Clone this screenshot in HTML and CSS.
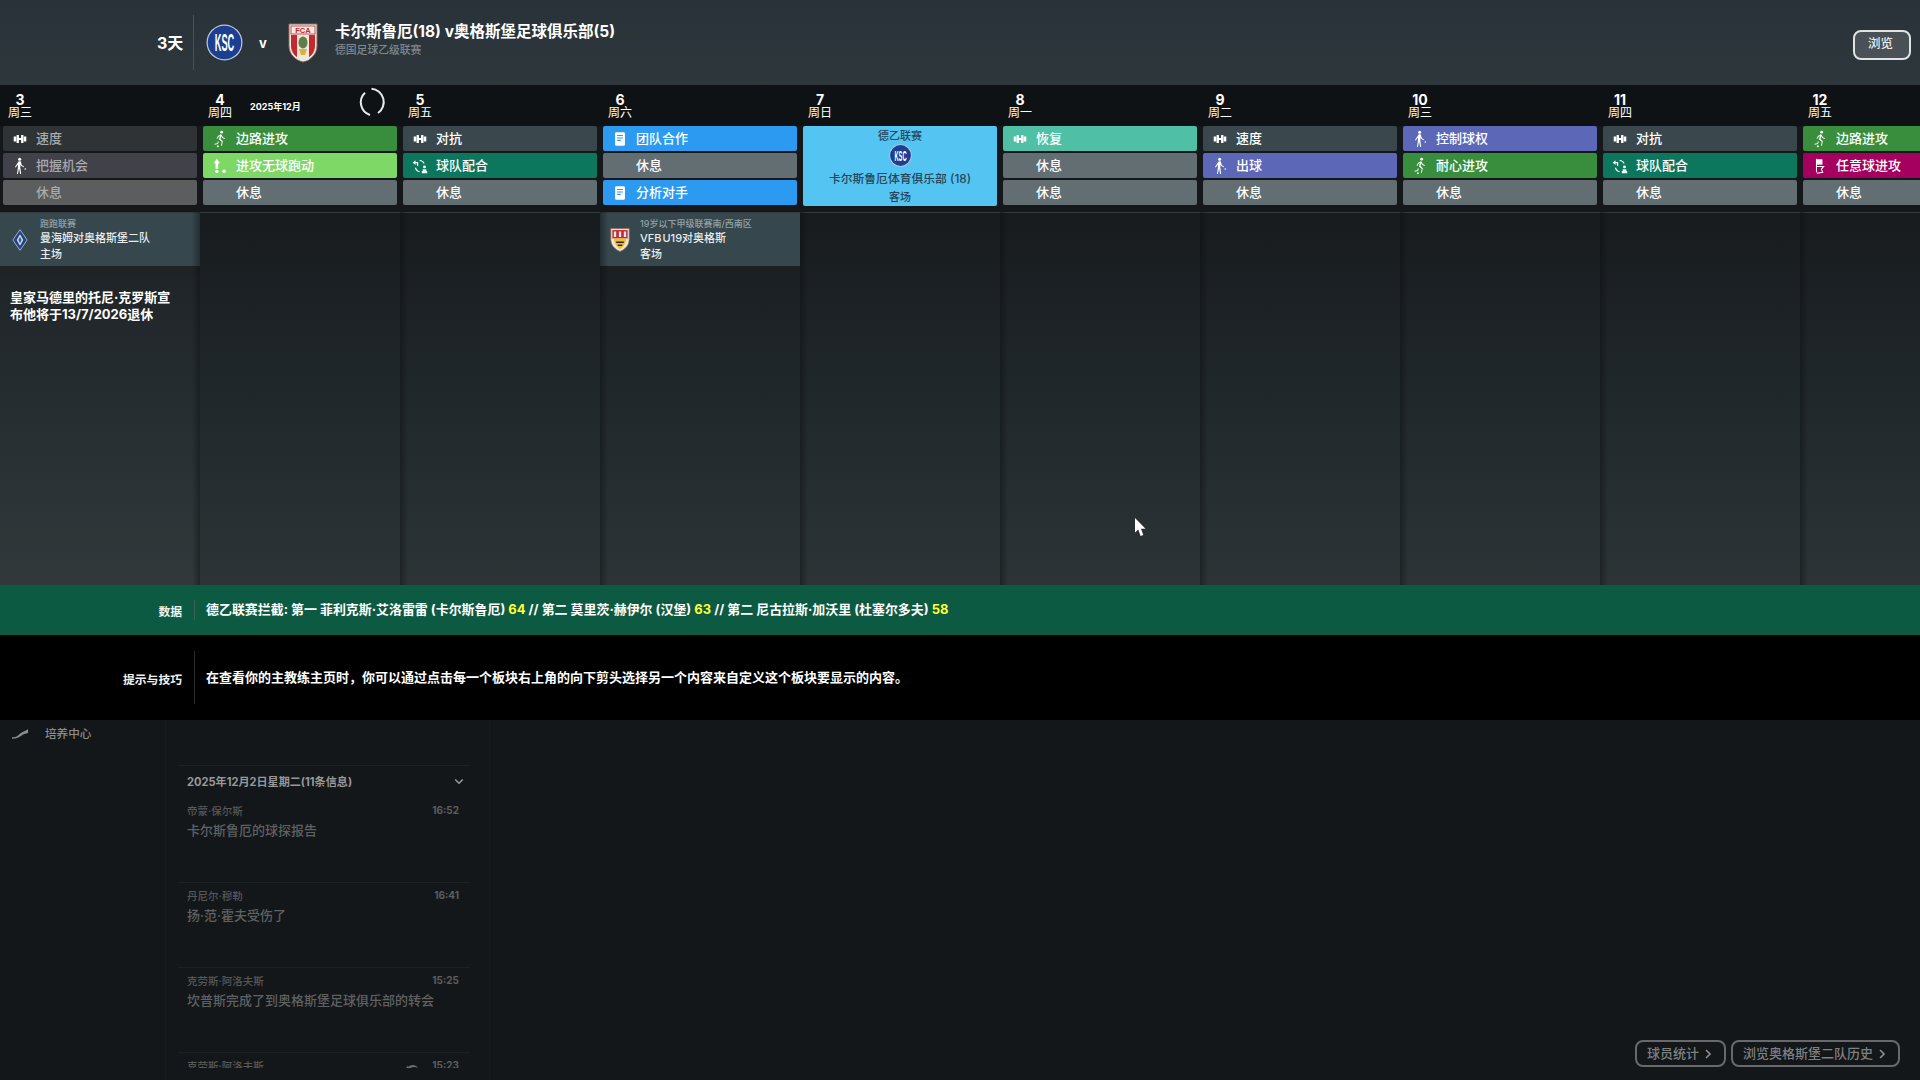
FILE: index.html
```html
<!DOCTYPE html>
<html lang="zh-CN">
<head>
<meta charset="utf-8">
<title>主教练主页</title>
<link rel="stylesheet" href="styles.css">
</head>
<body>
<svg class="defs" aria-hidden="true">
  <symbol id="i-dumb" viewBox="0 0 20 20"><path d="M3 7.200h2.800v5.600H3zM6.200 5.600h2.600v8.800H6.200zM8.800 8.800h2.400v2.400H8.800zM11.200 5.600h2.600v8.800h-2.600zM14.200 7.200H17v5.600h-2.800z"/></symbol>
  <symbol id="i-person" viewBox="0 0 20 20"><circle cx="9.600" cy="2.400" r="1.700"/><path d="M8.600 4.800h2.200l1.300 4.300 2.500 1.400-.5.9-3.100-1.600-.5-1.300-.2 2.800 1 7.700h-1.100l-1.300-6.300-1.200 6.300H6.700l1-8-.1-2.600-2.300 3.300-.9-.6z"/><circle cx="15.900" cy="13.400" r=".9"/></symbol>
  <symbol id="i-run" viewBox="0 0 20 20"><circle cx="11.800" cy="2.400" r="1.600"/><path d="M10.900 4.800 7.700 6.600 6.200 9.700l.8.400 1.400-2.600 1.500-.8-1 3.800 3.100 2.600-1 4.300h1l1.200-4.800-2.600-2.500.9-3.100 1 1.900 2.600 1 .3-.9-2.200-.9-1.300-2.700zM7.700 12.400l-.8 2.300-3 .6.100 1 3.700-.8 1-2.400z"/><circle cx="7.600" cy="18" r="1.100"/></symbol>
  <symbol id="i-doc" viewBox="0 0 20 20"><path fill-rule="evenodd" d="M6 2.500h8A1.500 1.500 0 0 1 15.500 4v12a1.500 1.500 0 0 1-1.500 1.500H6A1.500 1.500 0 0 1 4.500 16V4A1.500 1.500 0 0 1 6 2.500zM6.800 5.500v1.200h6.400V5.500zM6.800 8.200v1.200h6.400V8.200zM6.800 10.900v1.200h4v-1.200z"/></symbol>
  <symbol id="i-team" viewBox="0 0 20 20"><path d="M5 3.500 1.800 6.300 5 9V7h1.600v3H8V5.600H5zM4.200 12h1.400c.6 2 2 3.200 4 3.700V17c-2.800-.5-4.700-2.300-5.400-5zM9.500 3.200c2.700 0 4.800 1.400 5.700 3.800l-1.300.4c-.7-1.700-2.300-2.900-4.400-2.900z"/><circle cx="15" cy="11" r="1.600"/><path d="M13 13.500h4v2h1V18h-6v-2.500h1z"/></symbol>
  <symbol id="i-up" viewBox="0 0 20 20"><path d="M6.500 2 10 7H8v6H5V7H3z"/><circle cx="6.500" cy="16" r="1.800"/><circle cx="14.500" cy="15.800" r="1.900"/></symbol>
  <symbol id="i-flag" viewBox="0 0 20 20"><path d="M5.500 2h1.200v15H5.500z"/><path d="M6.700 2.500h6v6h-6z"/><path fill="none" stroke="currentColor" stroke-width="1.200" d="M6.500 10.500H14l-2.500 3 1.500 3.500-6.500 1"/></symbol>
  <symbol id="i-ksc" viewBox="0 0 36 36"><circle cx="18" cy="18" r="17.500" fill="#b9c6df"/><circle cx="18" cy="18" r="16.300" fill="#1d3f92"/><text x="18" y="26.500" text-anchor="middle" textLength="19" lengthAdjust="spacingAndGlyphs" class="ksc-text">KSC</text></symbol>
</svg>

<header class="top">
  <div class="countdown">3天</div>
  <div class="crests">
    <svg class="crest-home"><use href="#i-ksc"/></svg>
    <span class="versus">v</span>
    <svg class="crest-away" viewBox="0 0 30 40">
      <path d="M1 1h28v22c0 8-6 14-14 16C7 37 1 31 1 23z" fill="#f1ece6" stroke="#8c6a57" stroke-width="1"/>
      <path d="M3 12h24v11c0 7-5 12-12 14C8 35 3 30 3 23z" fill="#c5282d"/>
      <path d="M9 12h12v25l-6 1-6-2z" fill="#efe7dc"/>
      <ellipse cx="15" cy="19.500" rx="4.500" ry="6" fill="#5f7f4a"/>
      <path d="M11 26h8l-2 6h-4z" fill="#d7b13c"/>
      <rect x="3" y="3" width="24" height="8" fill="#f1ece6" stroke="#c5282d" stroke-width=".8"/>
      <text x="15" y="10" text-anchor="middle" class="fca-text">FCA</text>
    </svg>
  </div>
  <div class="fixture">
    <div class="fixture-title">卡尔斯鲁厄(18) v奥格斯堡足球俱乐部(5)</div>
    <div class="fixture-league">德国足球乙级联赛</div>
  </div>
  <button class="browse">浏览</button>
</header>

<section class="calendar">
  <article class="col past">
    <div class="day"><div class="date"><b>3</b><span>周三</span></div></div>
    <div class="tasks">
      <div class="task dim"><svg class="ic"><use href="#i-dumb"/></svg>速度</div>
      <div class="task dim-purple"><svg class="ic"><use href="#i-person"/></svg>把握机会</div>
      <div class="task dim-rest rest">休息</div>
    </div>
    <div class="event">
      <svg class="ev-crest" viewBox="0 0 24 34"><path d="M12 1 23 17 12 33 1 17z" fill="#26427c" stroke="#9db4dc" stroke-width="1.500"/><path d="M12 8l5 9-5 9-5-9z" fill="#d8e3f3"/><path d="M12 12l2.500 5-2.500 5-2.500-5z" fill="#2f5aa6"/></svg>
      <div class="ev-text"><small>跑跑联赛</small><span>曼海姆对奥格斯堡二队</span><span>主场</span></div>
    </div>
    <p class="news">皇家马德里的托尼·克罗斯宣<br>布他将于13/7/2026退休</p>
  </article>

  <article class="col current">
    <div class="day">
      <div class="date"><b>4</b><span>周四</span></div>
      <div class="month">2025年12月</div>
      <svg class="spinner" viewBox="0 0 27 28"><path d="M7 4.700A13.300 13.300 0 0 0 12 27M13.500 .8A13.300 13.300 0 0 1 20 25"/></svg>
    </div>
    <div class="tasks">
      <div class="task green"><svg class="ic"><use href="#i-run"/></svg>边路进攻</div>
      <div class="task lime"><svg class="ic"><use href="#i-up"/></svg>进攻无球跑动</div>
      <div class="task rest-bar rest">休息</div>
    </div>
  </article>

  <article class="col">
    <div class="day"><div class="date"><b>5</b><span>周五</span></div></div>
    <div class="tasks">
      <div class="task slate"><svg class="ic"><use href="#i-dumb"/></svg>对抗</div>
      <div class="task teal"><svg class="ic"><use href="#i-team"/></svg>球队配合</div>
      <div class="task rest-bar rest">休息</div>
    </div>
  </article>

  <article class="col">
    <div class="day"><div class="date"><b>6</b><span>周六</span></div></div>
    <div class="tasks">
      <div class="task blue"><svg class="ic"><use href="#i-doc"/></svg>团队合作</div>
      <div class="task rest-bar rest">休息</div>
      <div class="task blue"><svg class="ic"><use href="#i-doc"/></svg>分析对手</div>
    </div>
    <div class="event">
      <svg class="ev-crest vfb" viewBox="0 0 26 34"><path d="M1 2h24v14c0 8-5 13-12 16C6 29 1 24 1 16z" fill="#f0e6dc" stroke="#8a6a5a"/><path d="M3 4h20v11H3z" fill="#c22a3c"/><path d="M5 15h16c0 5-3 11-8 14-5-3-8-9-8-14z" fill="#eec02e"/><path d="M8 19h10v2H8zM10 23h6v2h-6z" fill="#2a2a2a"/><path d="M5 6h3v7H5zM11.500 6h3v7h-3zM18 6h3v7h-3z" fill="#f4e9e0"/></svg>
      <div class="ev-text"><small>19岁以下甲级联赛南/西南区</small><span class="bright">VFB U19对奥格斯</span><span>客场</span></div>
    </div>
  </article>

  <article class="col">
    <div class="day"><div class="date"><b>7</b><span>周日</span></div></div>
    <div class="tasks">
      <div class="match">
        <div class="match-comp">德乙联赛</div>
        <svg class="match-crest"><use href="#i-ksc"/></svg>
        <div class="match-team">卡尔斯鲁厄体育俱乐部 (18)</div>
        <div class="match-comp">客场</div>
      </div>
    </div>
  </article>

  <article class="col">
    <div class="day"><div class="date"><b>8</b><span>周一</span></div></div>
    <div class="tasks">
      <div class="task mint"><svg class="ic"><use href="#i-dumb"/></svg>恢复</div>
      <div class="task rest-bar rest">休息</div>
      <div class="task rest-bar rest">休息</div>
    </div>
  </article>

  <article class="col">
    <div class="day"><div class="date"><b>9</b><span>周二</span></div></div>
    <div class="tasks">
      <div class="task slate"><svg class="ic"><use href="#i-dumb"/></svg>速度</div>
      <div class="task purple"><svg class="ic"><use href="#i-person"/></svg>出球</div>
      <div class="task rest-bar rest">休息</div>
    </div>
  </article>

  <article class="col">
    <div class="day"><div class="date"><b>10</b><span>周三</span></div></div>
    <div class="tasks">
      <div class="task purple"><svg class="ic"><use href="#i-person"/></svg>控制球权</div>
      <div class="task green"><svg class="ic"><use href="#i-run"/></svg>耐心进攻</div>
      <div class="task rest-bar rest">休息</div>
    </div>
  </article>

  <article class="col">
    <div class="day"><div class="date"><b>11</b><span>周四</span></div></div>
    <div class="tasks">
      <div class="task slate"><svg class="ic"><use href="#i-dumb"/></svg>对抗</div>
      <div class="task teal"><svg class="ic"><use href="#i-team"/></svg>球队配合</div>
      <div class="task rest-bar rest">休息</div>
    </div>
  </article>

  <article class="col">
    <div class="day"><div class="date"><b>12</b><span>周五</span></div></div>
    <div class="tasks">
      <div class="task green"><svg class="ic"><use href="#i-run"/></svg>边路进攻</div>
      <div class="task magenta"><svg class="ic"><use href="#i-flag"/></svg>任意球进攻</div>
      <div class="task rest-bar rest">休息</div>
    </div>
  </article>
</section>

<section class="band stats">
  <div class="band-label">数据</div>
  <div class="band-text">德乙联赛拦截: 第一 菲利克斯·艾洛雷雷 (卡尔斯鲁厄) <em>64</em> // 第二 莫里茨·赫伊尔 (汉堡) <em>63</em> // 第二 尼古拉斯·加沃里 (杜塞尔多夫) <em>58</em></div>
</section>

<section class="band tips">
  <div class="band-label">提示与技巧</div>
  <div class="band-text">在查看你的主教练主页时，你可以通过点击每一个板块右上角的向下剪头选择另一个内容来自定义这个板块要显示的内容。</div>
</section>

<section class="lower">
  <div class="lower-title">
    <svg class="growth" viewBox="0 0 18 10"><path d="M0 8.500c4 0 5-.8 7-2.500s4-3.500 5.500-3.700L17 0v4c-3 .6-5 1.500-7.500 3S4 10 0 10z"/></svg>
    <span>培养中心</span>
  </div>
  <div class="inbox">
    <div class="inbox-list">
      <div class="inbox-head"><span>2025年12月2日星期二(11条信息)</span><svg class="chev" viewBox="0 0 12 8"><path d="M1.500 1.500 6 6l4.500-4.500"/></svg></div>
      <div class="msg"><div class="msg-meta"><span>帝蒙·保尔斯</span><time>16:52</time></div><div class="msg-title">卡尔斯鲁厄的球探报告</div></div>
      <div class="msg"><div class="msg-meta"><span>丹尼尔·穆勒</span><time>16:41</time></div><div class="msg-title">扬·范·霍夫受伤了</div></div>
      <div class="msg"><div class="msg-meta"><span>克劳斯·阿洛夫斯</span><time>15:25</time></div><div class="msg-title">坎普斯完成了到奥格斯堡足球俱乐部的转会</div></div>
      <div class="msg"><div class="msg-meta"><span>克劳斯·阿洛夫斯</span><svg class="reply" viewBox="0 0 14 8"><path d="M0 7 3 2v2c4-3 8-3 11 1-4-2-7-1-9 1l1 1z"/></svg><time>15:23</time></div></div>
    </div>
  </div>
  <div class="lower-actions">
    <button class="ghost">球员统计<svg class="more" viewBox="0 0 6 10"><path d="M1 1l4 4-4 4"/></svg></button>
    <button class="ghost">浏览奥格斯堡二队历史<svg class="more" viewBox="0 0 6 10"><path d="M1 1l4 4-4 4"/></svg></button>
  </div>
</section>

<svg class="cursor" viewBox="0 0 11 19"><path d="M0 0v14.500l3.300-3 2.300 6.500 2.700-1-2.300-6.200h4.500z" fill="#fff"/></svg>
</body>
</html>
```

FILE: styles.css
```css
* { box-sizing: border-box; }

html, body {
  margin: 0;
  width: 1920px;
  height: 1080px;
  overflow: hidden;
}

body {
  position: relative;
  display: flex;
  flex-direction: column;
  background: #141719;
  color: #fff;
  font-family: "Inter", "Noto Sans CJK SC", sans-serif;
  font-weight: 500;
}

.defs { display: none; }

/* top fixture bar */
.top {
  flex: 0 0 85px;
  display: flex;
  align-items: center;
  padding: 0 9px 0 157px;
  background: linear-gradient(#283238, #2d373c);
}

.countdown {
  width: 37px;
  height: 55px;
  padding-top: 17px;
  border-right: 1px solid #495257;
  font-size: 16px;
  line-height: 22px;
  font-weight: 700;
  white-space: nowrap;
}

.crests {
  display: flex;
  align-items: center;
  margin-left: 12px;
  width: 128px;
}

.crest-home { width: 37px; height: 37px; }

.versus {
  margin-left: 16px;
  width: 29px;
  font-size: 13px;
  font-weight: 700;
}

.crest-away { width: 30px; height: 40px; }

.ksc-text {
  font-family: "Liberation Sans", sans-serif;
  font-size: 24px;
  font-weight: 700;
  fill: #fff;
}

.fca-text {
  font-family: "Liberation Sans", sans-serif;
  font-size: 7.500px;
  font-weight: 700;
  fill: #c5282d;
}

.fixture { flex: 1; margin-top: -6px; margin-left: 1px; }

.fixture-title {
  font-size: 15.500px;
  line-height: 22px;
  font-weight: 700;
}

.fixture-league {
  font-size: 10.800px;
  line-height: 15px;
  color: #7f878b;
}

.browse {
  width: 58px;
  height: 30px;
  margin-top: 5px;
  padding: 0 3px 5px 0;
  border: 2px solid #dfe3e4;
  border-radius: 8px;
  background: #4a5156;
  color: #e9ebec;
  font: inherit;
  font-size: 12.500px;
}

/* calendar */
.calendar {
  flex: 0 0 500px;
  display: flex;
  overflow: hidden;
  background: linear-gradient(#121518 0, #171b1e 25%, #20272a 60%, #2c3436 100%);
}

.col {
  position: relative;
  flex: 0 0 200px;
  display: flex;
  flex-direction: column;
  align-items: stretch;
}

.col::after {
  content: "";
  position: absolute;
  left: 100%;
  top: 127px;
  bottom: 0;
  width: 8px;
  background: linear-gradient(90deg, rgba(10, 12, 14, .42), rgba(10, 12, 14, 0));
  z-index: 1;
}

.past {
  background: linear-gradient(transparent 127px, rgba(255, 255, 255, .025) 200px);
}

.past::after {
  left: auto;
  right: 0;
  background: linear-gradient(270deg, rgba(10, 12, 14, .42), rgba(10, 12, 14, 0));
}

.current { z-index: 2; }

.day {
  flex: 0 0 41px;
  position: relative;
  background: #0f1215;
  padding: 4px 0 0 8px;
}

.date {
  display: inline-flex;
  flex-direction: column;
  align-items: center;
}

.date b {
  font-size: 14px;
  line-height: 14px;
  font-weight: 700;
}

.date span {
  font-size: 12px;
  line-height: 12px;
  font-weight: 400;
  white-space: nowrap;
}

.month {
  position: absolute;
  left: 50px;
  top: 15px;
  font-size: 9px;
  line-height: 14px;
  font-weight: 700;
}

.spinner {
  position: absolute;
  left: 158px;
  top: 3px;
  width: 27px;
  height: 28px;
  overflow: visible;
  fill: none;
  stroke: #e6e8e9;
  stroke-width: 2;
}

.tasks {
  flex: 0 0 87px;
  display: flex;
  flex-direction: column;
  gap: 2px;
  padding: 0 3px;
  border-bottom: 1px solid #33393c;
  background: #14181b;
}

.task {
  display: flex;
  align-items: center;
  gap: 7px;
  height: 25px;
  padding: 0 0 2px 8px;
  border-radius: 2px;
  font-size: 13px;
  white-space: nowrap;
}

.task.rest { padding-left: 33px; }

.ic {
  flex: none;
  width: 18px;
  height: 18px;
  margin-top: 2px;
  fill: currentColor;
  color: #fff;
}

.green { background: #388e3c; }
.lime { background: #7ed866; }
.rest-bar { background: #636e73; }
.slate { background: #3a484e; }
.teal { background: #0d775e; }
.blue { background: #2b9af0; }
.mint { background: #4fbfa5; }
.purple { background: #5c67b8; }
.magenta { background: #a5005f; }

.dim { background: #2f3335; color: #a7a9aa; }
.dim-purple { background: #414149; color: #a7a8ad; }
.dim-rest { background: #5b5d5f; color: #a9abac; }

.match {
  height: 80px;
  border-radius: 2px;
  background: #54c5f2;
  color: #27465a;
  text-align: center;
  padding-top: 2px;
}

.match-comp {
  font-size: 11px;
  line-height: 16px;
}

.match-crest {
  display: block;
  width: 23px;
  height: 23px;
  margin: 0 auto 4px;
}

.match-team {
  font-size: 11.800px;
  line-height: 16px;
  margin-bottom: 2px;
}

.event {
  display: flex;
  align-items: center;
  height: 53px;
  background: #36474d;
  padding-left: 12px;
}

.ev-crest { flex: none; width: 16px; height: 22px; margin-right: 12px; }
.ev-crest.vfb { width: 20px; height: 26px; margin-right: 10px; margin-left: -2px; }

.ev-text {
  display: flex;
  flex-direction: column;
  white-space: nowrap;
}

.ev-text small {
  font-size: 9px;
  line-height: 13px;
  color: #93a2a8;
}

.ev-text span {
  font-size: 11px;
  line-height: 16px;
  color: #e8ecee;
}

.ev-text .bright { word-spacing: -2px; }

.news {
  margin: 23px 0 0 10px;
  font-size: 13px;
  line-height: 17px;
  font-weight: 700;
}

/* info bands */
.band {
  display: flex;
  align-items: center;
}

.stats { flex: 0 0 50px; background: #0d5a42; }
.tips { flex: 0 0 85px; background: #000; }

.band-label {
  width: 195px;
  display: flex;
  align-items: center;
  justify-content: flex-end;
  padding-right: 12px;
  border-right: 1px solid #3e5f53;
  font-size: 11.800px;
  font-weight: 700;
  color: #eef3f1;
}

.stats .band-label { height: 20px; }
.tips .band-label { height: 53px; border-right-color: #2c2c2c; padding-top: 2px; }

.band-text {
  padding-left: 11px;
  font-size: 13px;
  font-weight: 700;
  white-space: nowrap;
}

.stats .band-text { padding-bottom: 4px; font-size: 12.950px; }
.tips .band-text { padding-bottom: 2px; }

.band-text em {
  font-style: normal;
  color: #ffff33;
}

/* lower panel */
.lower {
  flex: 1;
  display: grid;
  grid-template-columns: 165px 325px 1fr;
  background: #141719;
  min-height: 0;
}

.lower-title {
  display: flex;
  align-items: flex-start;
  gap: 16px;
  padding: 6px 0 0 12px;
  font-size: 11.600px;
  line-height: 16px;
  color: #8a8c8e;
}

.growth {
  width: 17px;
  height: 10px;
  margin-top: 3px;
  fill: #8c8e90;
}

.inbox {
  padding: 45px 19px 12px 12px;
  border-left: 1px solid #181b1d;
  border-right: 1px solid #181b1d;
  overflow: hidden;
}

.inbox-list {
  height: 303px;
  overflow: hidden;
  border-top: 1px solid #1e2123;
}

.inbox-head {
  display: flex;
  align-items: center;
  justify-content: space-between;
  height: 32px;
  padding: 0 6px 2px 9px;
  font-size: 11.100px;
  font-weight: 700;
  color: #97999a;
}

.chev {
  width: 10px;
  height: 7px;
  fill: none;
  stroke: #9a9c9d;
  stroke-width: 1.800;
}

.msg {
  height: 85px;
  padding: 6px 11px 0 9px;
  border-bottom: 1px solid #1e2123;
}

.msg-meta {
  display: flex;
  align-items: center;
  font-size: 10.500px;
  line-height: 16px;
  color: #56585a;
}

.msg-meta span { flex: 1; }

.msg-meta time {
  margin-top: -4px;
  font-size: 10px;
  font-weight: 700;
  color: #5c5e60;
}

.reply {
  width: 13px;
  height: 8px;
  margin-right: 14px;
  fill: #6c6e70;
}

.msg-title {
  font-size: 13px;
  line-height: 22px;
  margin-top: -1px;
  color: #5f6163;
  white-space: nowrap;
}

.lower-actions {
  display: flex;
  justify-content: flex-end;
  align-items: flex-end;
  gap: 5px;
  padding: 0 20px 13px 0;
}

.ghost {
  display: flex;
  align-items: center;
  gap: 6px;
  height: 27px;
  padding: 0 13px 2px 10px;
  border: 2px solid #67696b;
  border-radius: 8px;
  background: transparent;
  color: #7e8082;
  font: inherit;
  font-size: 13px;
  white-space: nowrap;
}

.more {
  width: 6px;
  height: 10px;
  margin-top: 2px;
  fill: none;
  stroke: #8a8c8e;
  stroke-width: 1.600;
}

.cursor {
  position: absolute;
  left: 1135px;
  top: 518px;
  width: 11px;
  height: 19px;
}
```
